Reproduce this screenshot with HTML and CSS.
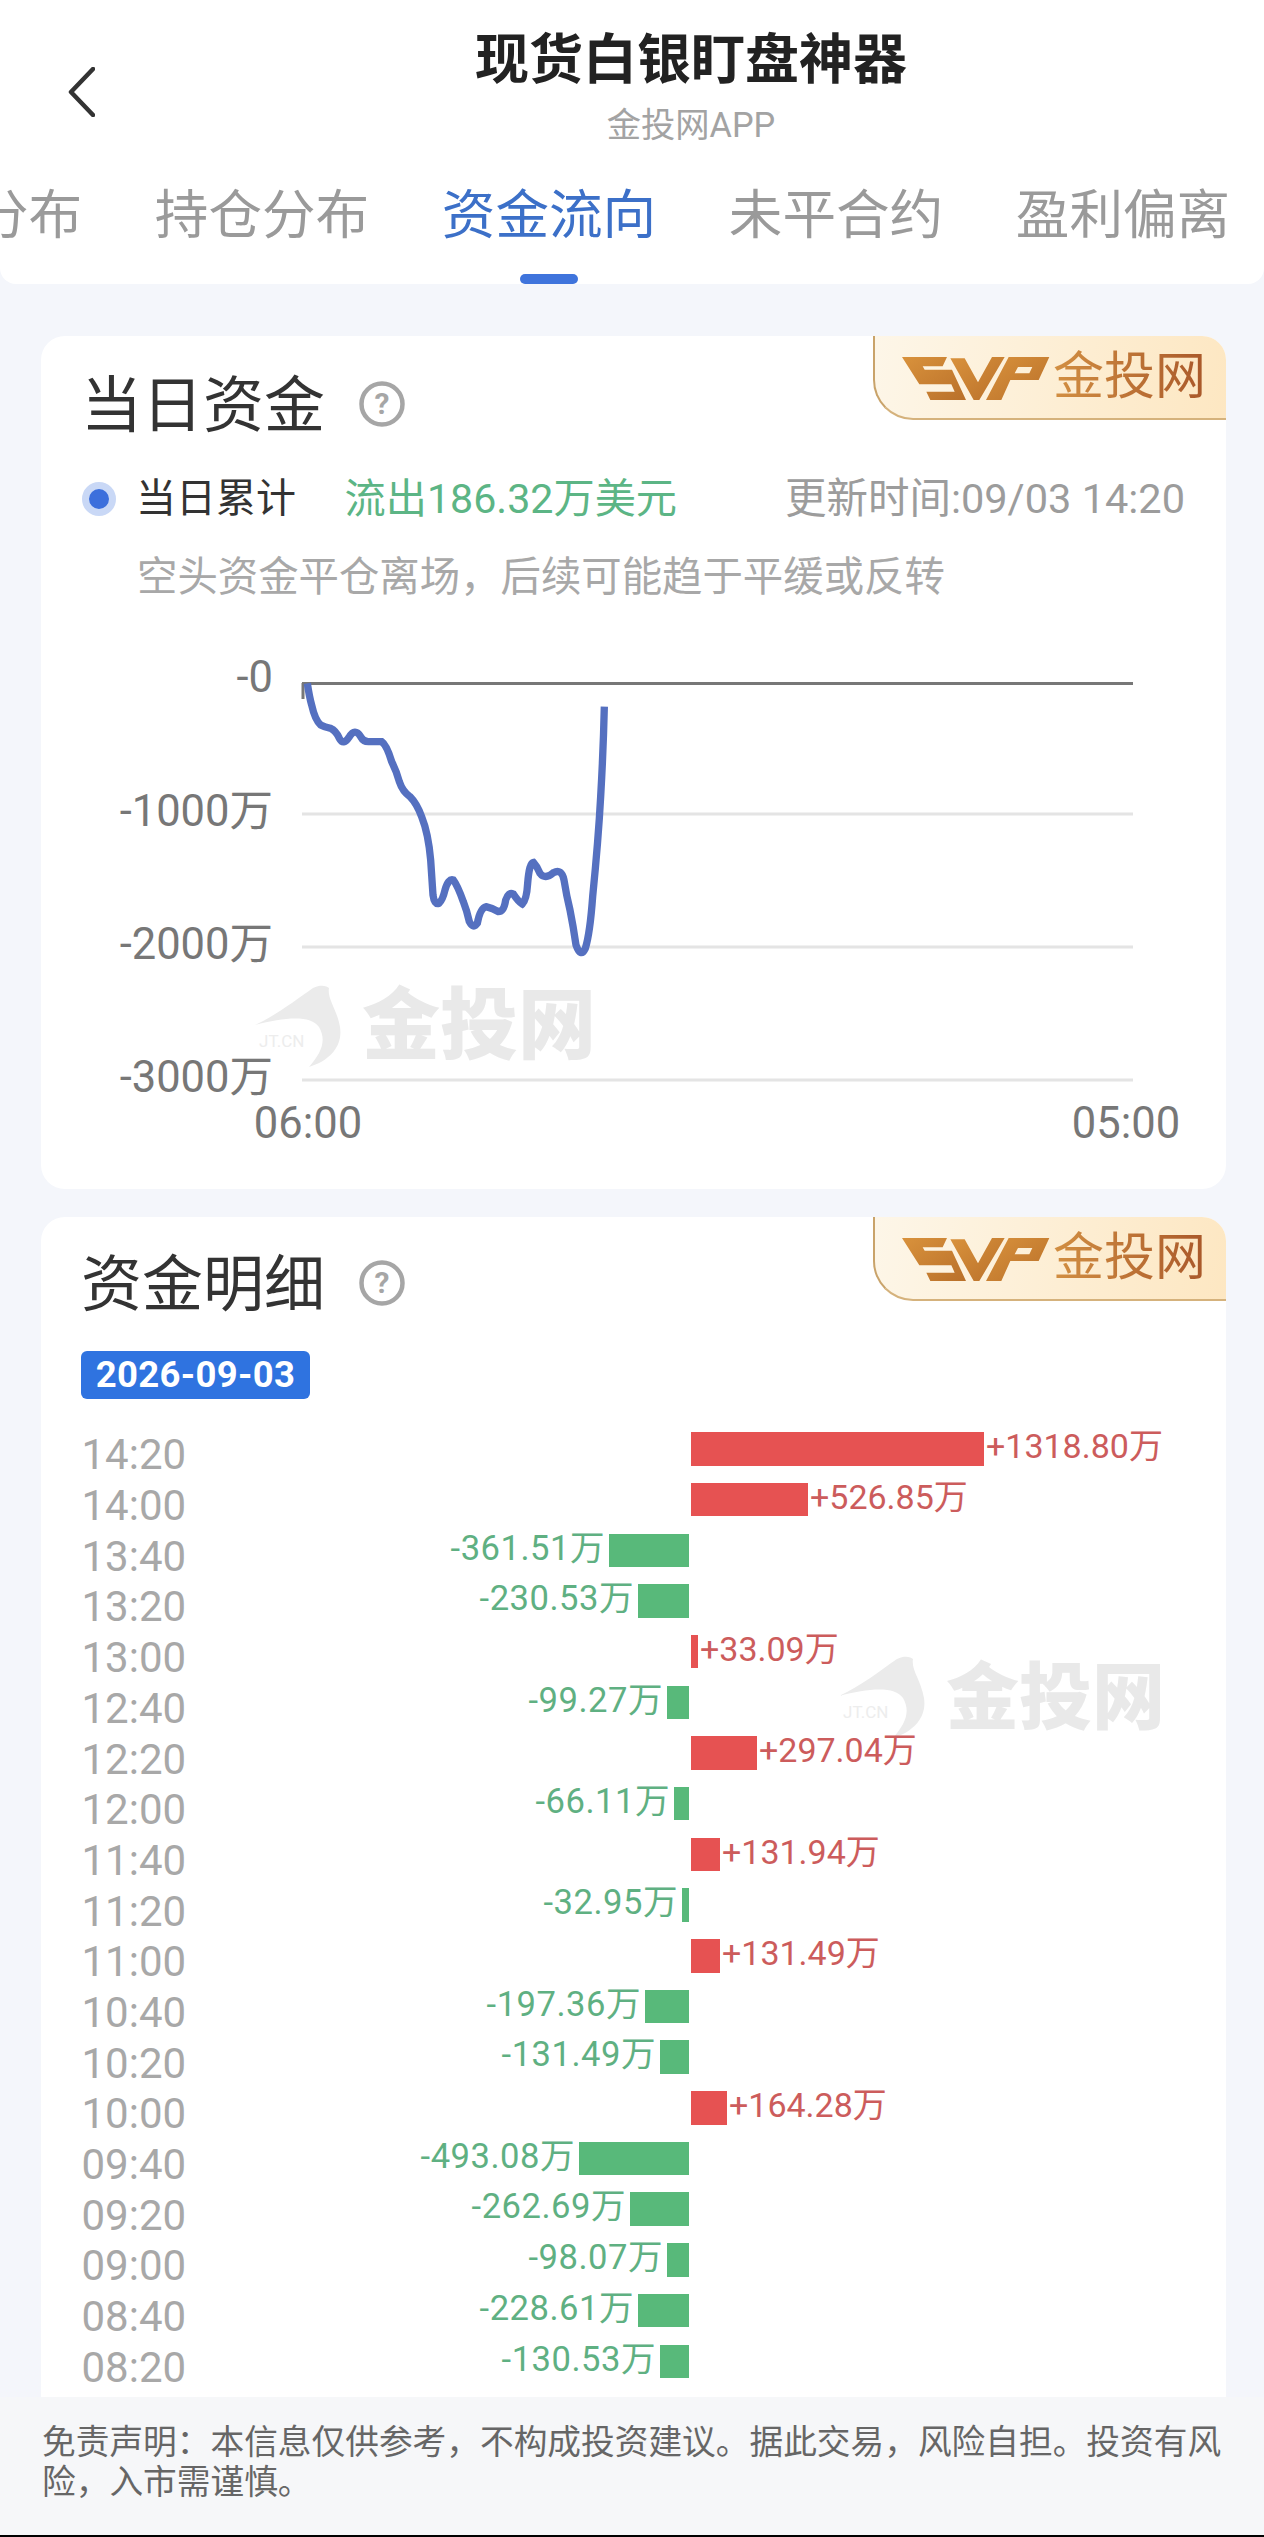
FILE: index.html
```html
<!DOCTYPE html>
<html lang="zh-CN">

<head>
    <meta charset="UTF-8">
    <meta name="viewport" content="width=device-width, initial-scale=1.0">
    <link rel="stylesheet" href="styles.css">
    <title>资金流向</title>
</head>

<body>
    <header class="header">
        <div class="top-bar">
            <a class="back">
                <svg width="27" height="50" viewBox="0 0 27 50">
                    <path d="M25 2 L3 25 L25 48" fill="none" stroke="#333" stroke-width="4.5" stroke-linecap="round" stroke-linejoin="round" />
                </svg>
            </a>
            <div class="heading">
                <h1 class="page-title">现货白银盯盘神器</h1>
                <div class="page-sub">金投网APP</div>
            </div>
        </div>
        <nav class="tabs">
            <a class="tab">多空分布</a>
            <a class="tab">持仓分布</a>
            <a class="tab tab-active">资金流向</a>
            <a class="tab">未平合约</a>
            <a class="tab">盈利偏离</a>
        </nav>
    </header>

    <main class="content">
        <section class="card card-day">
            <div class="vip-badge">
                <svg width="170" height="65" viewBox="0 0 510 195">
                    <defs>
                        <linearGradient id="gold" x1="0" y1="0" x2="1" y2="1">
                            <stop offset="0" stop-color="#d9923c" />
                            <stop offset="1" stop-color="#b9702a" />
                        </linearGradient>
                    </defs>
                    <path fill="url(#gold)" d="M30 36 L165 36 L152 64 L92 64 L98 74 L180 74 L222 165 L115 165 L103 140 L188 140 L178 118 L82 118 Z" />
                    <path fill="url(#gold)" d="M175 40 L218 40 L258 112 L300 36 L338 36 L262 165 L245 165 Z" />
                    <path fill="url(#gold)" fill-rule="evenodd" d="M350 36 L472 36 L440 105 L355 105 L328 165 L282 165 Z M378 66 L368 85 L412 85 L421 66 Z" />
                </svg>
                <span class="vip-name">金投网</span>
            </div>
            <div class="card-head">
                <h2 class="card-title">当日资金</h2>
                <svg class="help" width="46" height="46" viewBox="0 0 46 46">
                    <circle cx="23" cy="23" r="20.5" fill="none" stroke="#a6a6a6" stroke-width="4.5" />
                    <text x="23" y="33" class="help-mark">?</text>
                </svg>
            </div>
            <div class="legend">
                <span class="dot"></span>
                <span class="legend-name">当日累计</span>
                <span class="legend-value">流出186.32万美元</span>
                <span class="legend-time">更新时间:09/03 14:20</span>
            </div>
            <p class="note">空头资金平仓离场，后续可能趋于平缓或反转</p>
            <div class="watermark wm-day">
                <svg width="90" height="84" viewBox="0 0 90 84">
                    <path fill="#ebebeb" d="M0 40 C22 30 42 14 58 3 C66 -1 72 1 74 3 C72 14 82 24 85 42 C88 62 74 76 54 82 C66 68 72 56 64 42 C56 30 30 32 0 40 Z" />
                </svg>
                <span class="wm-site">JT.CN</span>
                <span class="wm-name">金投网</span>
            </div>
            <svg class="line-chart" width="1185" height="540" viewBox="41 640 1185 540">
                <line x1="302" y1="814" x2="1133" y2="814" class="grid-line" />
                <line x1="302" y1="947" x2="1133" y2="947" class="grid-line" />
                <line x1="302" y1="1080" x2="1133" y2="1080" class="grid-line" />
                <line x1="302" y1="683.5" x2="1133" y2="683.5" class="axis-line" />
                <line x1="303" y1="683" x2="303" y2="699" class="axis-line" />
                <text x="273" y="692" class="tick tick-end">-0</text>
                <text x="273" y="826" class="tick tick-end">-1000万</text>
                <text x="273" y="959" class="tick tick-end">-2000万</text>
                <text x="273" y="1092" class="tick tick-end">-3000万</text>
                <text x="308" y="1138" class="tick tick-mid">06:00</text>
                <text x="1126" y="1138" class="tick tick-mid">05:00</text>
                <g transform="translate(200 640) scale(.33333)">
                    <path class="flow-line" d="M322 130 Q328 170 335 195 Q345 240 362 255 Q375 262 392 265 Q408 272 418 295 Q430 318 447 292 Q465 262 482 290 Q490 305 505 305 L545 305 Q560 315 575 365 Q590 395 598 425 Q608 455 630 470 Q650 490 665 530 Q685 580 692 660 Q696 720 699 765 Q703 795 717 790 Q728 780 735 750 Q745 715 760 720 Q772 735 790 785 Q800 810 808 845 Q820 868 832 850 Q840 805 858 800 Q880 805 895 815 Q912 815 917 780 Q925 755 940 762 Q955 785 967 792 Q980 780 983 730 Q988 668 1000 667 Q1012 680 1020 700 Q1035 720 1060 698 Q1085 685 1092 720 Q1100 770 1110 810 Q1120 860 1128 915 Q1142 955 1156 925 Q1170 880 1178 770 Q1195 600 1202 470 Q1210 330 1213 200" />
                </g>
            </svg>
        </section>

        <section class="card card-detail">
            <div class="vip-badge">
                <svg width="170" height="65" viewBox="0 0 510 195">
                    <path fill="url(#gold)" d="M30 36 L165 36 L152 64 L92 64 L98 74 L180 74 L222 165 L115 165 L103 140 L188 140 L178 118 L82 118 Z" />
                    <path fill="url(#gold)" d="M175 40 L218 40 L258 112 L300 36 L338 36 L262 165 L245 165 Z" />
                    <path fill="url(#gold)" fill-rule="evenodd" d="M350 36 L472 36 L440 105 L355 105 L328 165 L282 165 Z M378 66 L368 85 L412 85 L421 66 Z" />
                </svg>
                <span class="vip-name">金投网</span>
            </div>
            <div class="card-head">
                <h2 class="card-title">资金明细</h2>
                <svg class="help" width="46" height="46" viewBox="0 0 46 46">
                    <circle cx="23" cy="23" r="20.5" fill="none" stroke="#a6a6a6" stroke-width="4.5" />
                    <text x="23" y="33" class="help-mark">?</text>
                </svg>
            </div>
            <div class="date-tag">2026-09-03</div>
            <div class="watermark wm-detail">
                <svg width="90" height="84" viewBox="0 0 90 84">
                    <path fill="#ebebeb" d="M0 40 C22 30 42 14 58 3 C66 -1 72 1 74 3 C72 14 82 24 85 42 C88 62 74 76 54 82 C66 68 72 56 64 42 C56 30 30 32 0 40 Z" />
                </svg>
                <span class="wm-site">JT.CN</span>
                <span class="wm-name">金投网</span>
            </div>
            <div class="flow-list">
                <div class="row"><span class="time">14:20</span><span class="neg"></span><span class="pos"><i class="bar bar-up" style="width:293px"></i>+1318.80万</span></div>
                <div class="row"><span class="time">14:00</span><span class="neg"></span><span class="pos"><i class="bar bar-up" style="width:117px"></i>+526.85万</span></div>
                <div class="row"><span class="time">13:40</span><span class="neg">-361.51万<i class="bar bar-down" style="width:80px"></i></span><span class="pos"></span></div>
                <div class="row"><span class="time">13:20</span><span class="neg">-230.53万<i class="bar bar-down" style="width:51px"></i></span><span class="pos"></span></div>
                <div class="row"><span class="time">13:00</span><span class="neg"></span><span class="pos"><i class="bar bar-up" style="width:7px"></i>+33.09万</span></div>
                <div class="row"><span class="time">12:40</span><span class="neg">-99.27万<i class="bar bar-down" style="width:22px"></i></span><span class="pos"></span></div>
                <div class="row"><span class="time">12:20</span><span class="neg"></span><span class="pos"><i class="bar bar-up" style="width:66px"></i>+297.04万</span></div>
                <div class="row"><span class="time">12:00</span><span class="neg">-66.11万<i class="bar bar-down" style="width:15px"></i></span><span class="pos"></span></div>
                <div class="row"><span class="time">11:40</span><span class="neg"></span><span class="pos"><i class="bar bar-up" style="width:29px"></i>+131.94万</span></div>
                <div class="row"><span class="time">11:20</span><span class="neg">-32.95万<i class="bar bar-down" style="width:7px"></i></span><span class="pos"></span></div>
                <div class="row"><span class="time">11:00</span><span class="neg"></span><span class="pos"><i class="bar bar-up" style="width:29px"></i>+131.49万</span></div>
                <div class="row"><span class="time">10:40</span><span class="neg">-197.36万<i class="bar bar-down" style="width:44px"></i></span><span class="pos"></span></div>
                <div class="row"><span class="time">10:20</span><span class="neg">-131.49万<i class="bar bar-down" style="width:29px"></i></span><span class="pos"></span></div>
                <div class="row"><span class="time">10:00</span><span class="neg"></span><span class="pos"><i class="bar bar-up" style="width:36px"></i>+164.28万</span></div>
                <div class="row"><span class="time">09:40</span><span class="neg">-493.08万<i class="bar bar-down" style="width:110px"></i></span><span class="pos"></span></div>
                <div class="row"><span class="time">09:20</span><span class="neg">-262.69万<i class="bar bar-down" style="width:59px"></i></span><span class="pos"></span></div>
                <div class="row"><span class="time">09:00</span><span class="neg">-98.07万<i class="bar bar-down" style="width:22px"></i></span><span class="pos"></span></div>
                <div class="row"><span class="time">08:40</span><span class="neg">-228.61万<i class="bar bar-down" style="width:51px"></i></span><span class="pos"></span></div>
                <div class="row"><span class="time">08:20</span><span class="neg">-130.53万<i class="bar bar-down" style="width:29px"></i></span><span class="pos"></span></div>
            </div>
        </section>
    </main>

    <footer class="disclaimer">
        免责声明：本信息仅供参考，不构成投资建议。据此交易，风险自担。投资有风险，入市需谨慎。
    </footer>
</body>

</html>
```

FILE: styles.css
```css
html,
body {
    margin: 0;
    padding: 0;
}

body {
    width: 1264px;
    height: 2537px;
    overflow: hidden;
    background-color: #f4f6fb;
    font-family: Roboto, "Noto Sans CJK SC", sans-serif;
    color: #333;
}

h1,
h2,
p {
    margin: 0;
    font-weight: normal;
}

.header {
    height: 284px;
    box-sizing: border-box;
    padding-top: 29px;
    overflow: hidden;
    background-color: #fff;
    border-radius: 0 0 16px 16px;
}

.top-bar {
    display: flex;
}

.back {
    width: 118px;
    box-sizing: border-box;
    padding: 38px 0 0 68px;
}

.heading {
    flex: 1;
    text-align: center;
}

.page-title {
    font-size: 54px;
    line-height: 64px;
    font-weight: bold;
    color: #222;
}

.page-sub {
    margin-top: 10px;
    font-size: 34.3px;
    line-height: 44px;
    color: #a3a3a3;
}

.tabs {
    display: flex;
    gap: 71px;
    margin: 34.5px 0 0 -133px;
}

.tab {
    flex: none;
    width: 216px;
    font-size: 53.6px;
    line-height: 68px;
    text-align: center;
    color: #9a9a9a;
}

.tab-active {
    color: #3c70c8;
}

.tab-active::after {
    content: "";
    display: block;
    width: 58px;
    height: 10px;
    margin: 24.5px auto 0;
    border-radius: 5px;
    background-color: #3f74dc;
}

.content {
    display: flex;
    flex-direction: column;
    gap: 28px;
    padding: 52px 38px 0 41px;
}

.card {
    position: relative;
    background-color: #fff;
    border-radius: 24px;
}

.card-day {
    height: 853px;
    box-sizing: border-box;
    padding-top: 39.5px;
}

.card-detail {
    height: 1180px;
    box-sizing: border-box;
    padding-top: 37.5px;
    border-radius: 24px 24px 0 0;
}

.vip-badge {
    position: absolute;
    top: 0;
    right: 0;
    display: flex;
    align-items: center;
    width: 353px;
    height: 84px;
    box-sizing: border-box;
    padding-left: 17px;
    border-left: 2px solid #c9a36a;
    border-bottom: 2px solid #d5b27c;
    border-radius: 0 24px 0 40px;
    background: linear-gradient(100deg, #fdf6e8, #fde7c2);
}

.vip-name {
    margin-left: -9px;
    font-size: 51px;
    line-height: 56px;
    background: linear-gradient(90deg, #d28f42, #a9582a);
    -webkit-background-clip: text;
    background-clip: text;
    color: transparent;
}

.card-head {
    display: flex;
    align-items: center;
    padding-left: 40px;
}

.card-title {
    font-size: 61px;
    line-height: 60px;
    color: #333;
}

.help {
    margin: -3px 0 0 34px;
}

.help-mark {
    font-size: 30px;
    font-weight: bold;
    text-anchor: middle;
    fill: #a6a6a6;
}

.legend {
    display: flex;
    align-items: center;
    margin-top: 38px;
    padding: 0 41px;
    font-size: 40px;
    line-height: 50px;
}

.dot {
    width: 20px;
    height: 20px;
    margin-right: 20px;
    border: 7px solid #c9d8f6;
    border-radius: 50%;
    background-color: #3c6fdc;
}

.legend-name {
    color: #333;
}

.legend-value {
    margin-left: 48.5px;
    font-size: 41.2px;
    color: #5cb585;
}

.legend-time {
    margin-left: auto;
    font-size: 41.5px;
    color: #9c9c9c;
}

.note {
    margin-top: 29px;
    padding-left: 96px;
    font-size: 40.4px;
    line-height: 50px;
    color: #a8a8a8;
}

.line-chart {
    display: block;
    margin-top: 37.5px;
}

.grid-line {
    stroke: #e4e4e4;
    stroke-width: 3;
}

.axis-line {
    stroke: #777;
    stroke-width: 3;
}

.tick {
    font-size: 43.5px;
    fill: #777;
}

.tick-end {
    text-anchor: end;
}

.tick-mid {
    text-anchor: middle;
}

.flow-line {
    fill: none;
    stroke: #5570c0;
    stroke-width: 22;
}

.watermark {
    position: absolute;
    display: flex;
    align-items: center;
    gap: 17px;
    pointer-events: none;
}

.wm-day {
    left: 214px;
    top: 649px;
}

.wm-detail {
    left: 798px;
    top: 439px;
}

.wm-site {
    position: absolute;
    left: 4px;
    top: 46px;
    font-size: 17px;
    color: #ededed;
}

.wm-name {
    font-size: 78px;
    line-height: 84px;
    font-weight: 900;
    color: #e9e9e9;
}

.wm-detail .wm-name {
    font-size: 73px;
}

.date-tag {
    width: 229px;
    height: 48px;
    margin: 36.5px 0 0 40px;
    border-radius: 6px;
    background-color: #2f73e0;
    font-size: 36.5px;
    line-height: 48px;
    font-weight: bold;
    letter-spacing: .3px;
    text-align: center;
    color: #fff;
}

.flow-list {
    position: relative;
    margin-top: 23.4px;
    padding-left: 40.5px;
}

.row {
    display: grid;
    grid-template-columns: 108.5px 499px 1fr;
    align-items: center;
    height: 50.7px;
    font-size: 34.6px;
}

.time {
    padding-top: 13px;
    font-size: 42px;
    line-height: 40px;
    color: #a8a8a8;
}

.neg,
.pos {
    display: flex;
    align-items: flex-start;
    height: 33.5px;
    line-height: 28px;
}

.neg {
    justify-content: flex-end;
    letter-spacing: .5px;
    color: #5fb082;
}

.pos {
    margin-left: 2px;
    font-size: 34px;
    color: #cc5c5c;
}

.bar {
    flex: none;
    height: 33.5px;
}

.bar-up {
    margin-right: 2px;
    background-color: #e65252;
}

.bar-down {
    margin-left: 4px;
    background-color: #58b97a;
}

.disclaimer {
    height: 140px;
    box-sizing: border-box;
    padding: 26px 30px 0 42px;
    border-bottom: 2px solid #000;
    background-color: #f6f7f9;
    font-size: 33.7px;
    line-height: 40px;
    color: #666;
}
```
